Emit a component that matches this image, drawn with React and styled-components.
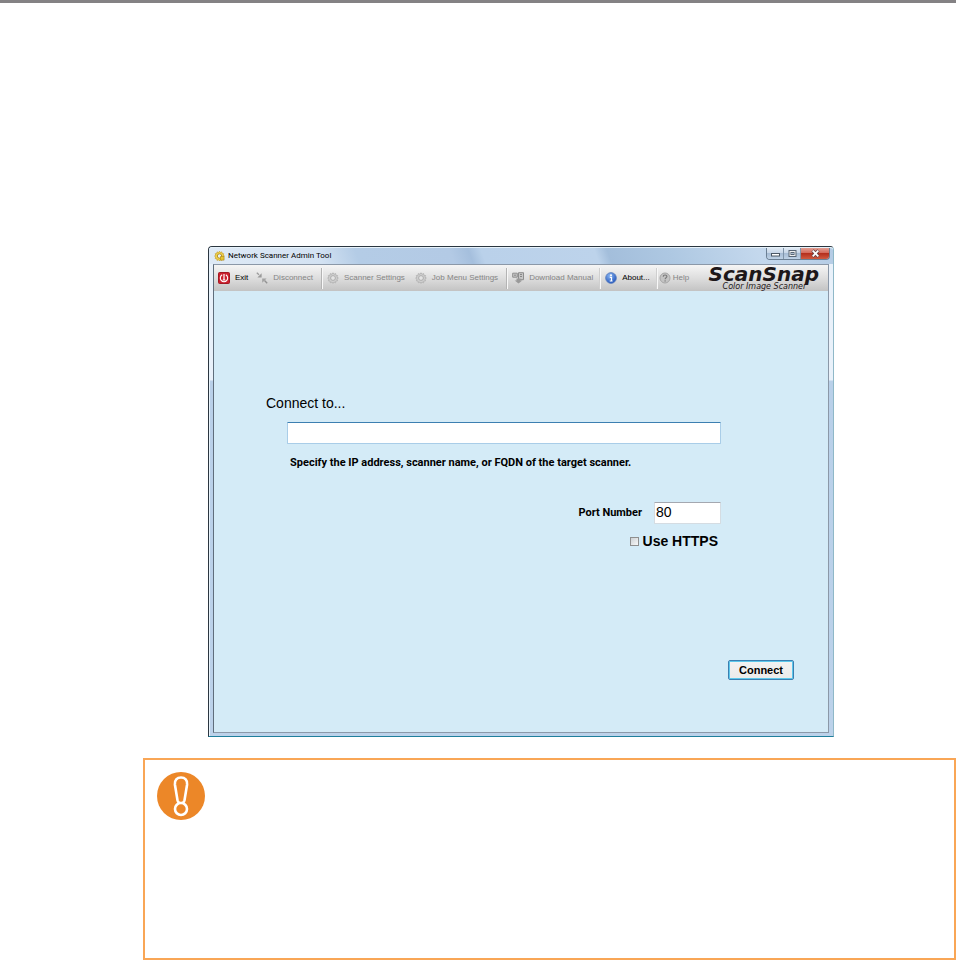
import { useState } from "react";
import styled, { createGlobalStyle } from "styled-components";

const GlobalStyle = createGlobalStyle`
  * {
    box-sizing: border-box;
  }

  body {
    margin: 0;
    background: #fff;
    color: #000;
    font-family: "Liberation Sans", Arial, sans-serif;
  }
`;

const Page = styled.main`
  border-top: 3px solid #848284;
  padding-top: 243px;
`;

const Window = styled.section`
  margin: 0 122px 21px 208px;
  padding: 0 4px 3px;
  border: 1px solid #2b3640;
  border-right-color: #8fb8c8;
  border-bottom: 1px solid #1f7f9c;
  border-radius: 4px 4px 0 0;
  background: linear-gradient(#e9f1fa 133px, #b9d0e9 134px, #bcd2ea);
  box-shadow: inset 1px 1px 0 #e8f3fb;
`;

const TitleBar = styled.header`
  display: flex;
  align-items: center;
  gap: 3px;
  height: 17px;
  margin: 0 -4px;
  padding-left: 5px;
  border-top: 1px solid #e8f3fb;
  border-radius: 3px 3px 0 0;
  background: linear-gradient(
    70deg,
    #dfeaf6 0%,
    #d3e2f2 18%,
    #b4cce6 24%,
    #b3cae5 39%,
    #a5bfdd 42%,
    #bad1ea 44%,
    #bdd3eb 62%,
    #a3bedb 64%,
    #aec8e2 74%,
    #c4d8ed 88%,
    #b5cce5 100%
  );
`;

const Title = styled.h1`
  flex: 1;
  margin: 0;
  font: 8px/14px Roboto, sans-serif;
  white-space: nowrap;
`;

const WindowButtons = styled.div`
  display: flex;
  align-self: flex-start;
  margin: 0 3px 0 0;
  border: 1px solid #6b7f93;
  border-top: 0;
  border-radius: 0 0 4px 4px;
  overflow: hidden;
`;

const WindowButton = styled.button`
  display: flex;
  align-items: center;
  justify-content: center;
  width: ${(p) => (p.$close ? 28 : 17)}px;
  height: 11px;
  padding: 0;
  border: 0;
  border-right: ${(p) => (p.$close ? "0" : "1px solid #7f93a8")};
  background: ${(p) =>
    p.$close
      ? "linear-gradient(#e3a094, #d4695a 45%, #b5301d 50%, #cf5a40)"
      : "linear-gradient(#dfe9f4, #c7d6e7 45%, #a7bdd5 50%, #bed1e5)"};
`;

const Client = styled.div`
  border: 1px solid #8b98a8;
  border-left-color: #5f6d7c;
  background: #d4ebf7;
`;

const Toolbar = styled.nav`
  display: flex;
  align-items: center;
  height: 26px;
  padding: 0 9px 0 4px;
  background: linear-gradient(#f5f5f5, #dedede 50%, #c3c3c3);
`;

const ToolButton = styled.button`
  display: flex;
  align-items: center;
  gap: ${(p) => p.$gap || 5}px;
  height: 24px;
  padding: 0;
  margin-right: ${(p) => p.$after || 8}px;
  border: 0;
  background: none;
  color: #000;
  font: 8px/14px "Liberation Sans", Arial, sans-serif;
  white-space: nowrap;

  &:disabled {
    color: #858585;
  }

  svg {
    flex: none;
  }
`;

const Divider = styled.span`
  width: 2px;
  height: 21px;
  margin-right: ${(p) => p.$after || 4}px;
  border-left: 1px solid ${(p) => (p.$light ? "#cfcfcf" : "#b4b4b4")};
  border-right: 1px solid #f8f8f8;
`;

const Brand = styled.div`
  margin-left: auto;
  color: #1d1719;
  font-family: "DejaVu Sans", sans-serif;
  font-style: italic;
  white-space: nowrap;
`;

const BrandName = styled.div`
  font-size: 20px;
  font-weight: bold;
  line-height: 18px;
`;

const BrandLine = styled.div`
  padding-left: 14px;
  font-size: 8px;
  line-height: 8px;
`;

const Form = styled.form`
  padding: 103px 34px 52px 52px;
`;

const Heading = styled.h2`
  margin: 0 0 10px;
  font-size: 14px;
  font-weight: normal;
  line-height: 18px;
`;

const Fields = styled.div`
  margin: 0 73px 0 21px;
`;

const TextInput = styled.input`
  display: block;
  width: ${(p) => p.$width || "100%"};
  height: 22px;
  padding: 0 1px 2px;
  border: 1px solid ${(p) => (p.$active ? "#a9cde8" : "#d5dce2")};
  border-top-color: ${(p) => (p.$active ? "#3c7fb1" : "#a4a8b0")};
  border-radius: 1px;
  outline: none;
  background: #fff;
  font: 14px/18px "Liberation Sans", Arial, sans-serif;
`;

const Hint = styled.label`
  display: block;
  margin: 10px 3px 30px;
  font: bold 11px/18px Roboto, sans-serif;
`;

const PortRow = styled.div`
  display: flex;
  align-items: center;
  justify-content: flex-end;
  gap: 12px;
  margin-bottom: 8px;
  font: bold 11px/20px Roboto, sans-serif;
`;

const HttpsRow = styled.label`
  display: flex;
  align-items: center;
  justify-content: flex-end;
  gap: 4px;
  margin-right: 3px;
  font-size: 14px;
  font-weight: bold;
  line-height: 18px;
`;

const Checkbox = styled.input`
  appearance: none;
  width: 9px;
  height: 9px;
  margin: 0;
  border: 1px solid #8e8f8f;
  background: linear-gradient(135deg, #cdd2d6, #f8f8f8);

  &:checked {
    background: #3c7fb1;
  }
`;

const Actions = styled.div`
  display: flex;
  justify-content: flex-end;
  margin-top: 110px;
`;

const ConnectButton = styled.button`
  width: 66px;
  height: 20px;
  padding: 0;
  border: 1px solid #3c7fb1;
  border-radius: 2px;
  background: linear-gradient(#f2f2f2, #ebebeb);
  box-shadow: inset 0 0 0 1px #5cc8ec;
  color: #000;
  font: bold 11px/16px "Liberation Sans", Arial, sans-serif;
`;

const Note = styled.aside`
  min-height: 202px;
  margin-left: 143px;
  padding: 12px;
  border: 2px solid #f9a656;
`;

const GEAR_PATH =
  "M6 .8l1 1.5 1.6-.8.2 1.8 1.8.2-.7 1.6 1.4 1-1.4 1 .7 1.7-1.8.2-.2 1.8L7 10l-1 1.4L5 10l-1.7.8-.2-1.8-1.8-.2L2 7.1l-1.4-1L2 5.1l-.7-1.6 1.8-.2.2-1.8L5 2.3z";

function GearIcon() {
  return (
    <svg width="12" height="12" viewBox="0 0 12 12" aria-hidden="true">
      <path d={GEAR_PATH} fill="#cfcfcf" stroke="#b0b0b0" strokeWidth=".8" />
      <circle cx="6" cy="6" r="2.4" fill="#e4e4e4" stroke="#a8a8a8" strokeWidth=".9" />
    </svg>
  );
}

function AppIcon() {
  return (
    <svg width="11" height="12" viewBox="0 0 12 12" aria-hidden="true">
      <path d={GEAR_PATH} fill="#f5d84c" stroke="#c9a12a" strokeWidth=".8" />
      <circle cx="6" cy="6" r="2.4" fill="#e9f0f5" stroke="#ad8a20" />
      <path d="M7 6.5h4v4H7z" fill="#e7c42f" stroke="#a57f17" strokeWidth=".6" />
    </svg>
  );
}

function ExitIcon() {
  return (
    <svg width="12" height="12" viewBox="0 0 12 12" aria-hidden="true">
      <rect x=".5" y=".5" width="11" height="11" rx="1" fill="#cb1f2d" stroke="#a31722" />
      <path d="M4.2 2.8a3.7 3.7 0 1 0 3.6 0" fill="none" stroke="#fff" strokeWidth="1.1" />
      <path d="M6 2v5.5M4.7 8h2.6" stroke="#fff" strokeWidth="1.2" />
    </svg>
  );
}

function DisconnectIcon() {
  return (
    <svg width="12" height="12" viewBox="0 0 12 12" aria-hidden="true">
      <path d="M.8.8l2.2 2" stroke="#9b9b9b" strokeWidth="1.3" />
      <path d="M5.6 1.2v4.2H1.4z" fill="#999" />
      <path d="M6.2 6.4h4.4L6.2 10.8z" fill="#a2a2a2" />
      <path d="M8.5 8.5l2.7 2.7" stroke="#929292" strokeWidth="1.4" />
    </svg>
  );
}

function DownloadIcon() {
  return (
    <svg width="13" height="12" viewBox="0 0 13 12" aria-hidden="true">
      <path d="M.7 1.2h4.6v4H.7zM6.5.7h5v7h-5z" fill="#c6c6c6" stroke="#8e8e8e" />
      <path d="M2 3.2h2M8 2.5h2M8 4.5h2" stroke="#888" />
      <path d="M4.5 6.5h4v2h1.8l-3.8 3-3.8-3h1.8z" fill="#999" />
    </svg>
  );
}

function InfoIcon() {
  return (
    <svg width="12" height="12" viewBox="0 0 12 12" aria-hidden="true">
      <defs>
        <radialGradient id="info" cx=".4" cy=".3" r=".7">
          <stop offset="0" stopColor="#8bb7f2" />
          <stop offset="1" stopColor="#2356bd" />
        </radialGradient>
      </defs>
      <circle cx="6" cy="6" r="5.4" fill="url(#info)" stroke="#5f82bd" strokeWidth=".8" />
      <circle cx="6" cy="3.2" r="1" fill="#fff" />
      <path d="M4.8 5.3H6.5V9M4.7 9h2.9" fill="none" stroke="#fff" strokeWidth="1.2" />
    </svg>
  );
}

function HelpIcon() {
  return (
    <svg width="12" height="12" viewBox="0 0 12 12" aria-hidden="true">
      <circle cx="6" cy="6" r="5" fill="#c4c4c4" stroke="#a6a6a6" />
      <path
        d="M4.2 4.7c0-2.3 3.7-2.2 3.7-.2 0 1.3-1.8 1.2-1.8 2.7"
        fill="none"
        stroke="#777"
        strokeWidth="1.1"
      />
      <circle cx="6.1" cy="8.9" r=".7" fill="#777" />
    </svg>
  );
}

function WarningIcon() {
  return (
    <svg width="48" height="48" viewBox="0 0 48 48" role="img" aria-label="Attention">
      <circle cx="24" cy="24" r="24" fill="#ec8728" />
      <path
        d="M24 5.5c-4 0-6.6 2.7-6.1 7l2.6 15.7c.9 4 6.1 4 7 0l2.6-15.7c.5-4.3-2.1-7-6.1-7z"
        fill="none"
        stroke="#fff"
        strokeWidth="2.6"
      />
      <circle cx="24" cy="37" r="6" fill="#ec8728" stroke="#fff" strokeWidth="2.6" />
    </svg>
  );
}

function WindowGlyph({ type }) {
  return (
    <svg width="11" height="9" viewBox="0 0 11 9" aria-hidden="true">
      {type === "min" && (
        <rect x="1.5" y="4.5" width="8" height="2.5" fill="#fff" stroke="#4c5865" />
      )}
      {type === "max" && (
        <>
          <rect x="2" y="1.5" width="7" height="6" fill="#eee" stroke="#596675" />
          <rect x="4" y="3.5" width="3" height="2" fill="#aebed0" stroke="#596675" />
        </>
      )}
      {type === "close" && (
        <>
          <path d="M2.5 1.5l6 6m0-6l-6 6" stroke="#6d4348" strokeWidth="3.4" />
          <path d="M2.7 1.7l5.6 5.6m0-5.6L2.7 7.3" stroke="#fff" strokeWidth="1.8" />
        </>
      )}
    </svg>
  );
}

function ConnectForm() {
  const [address, setAddress] = useState("");
  const [port, setPort] = useState("80");
  const [https, setHttps] = useState(false);

  return (
    <Form onSubmit={(e) => e.preventDefault()}>
      <Heading>Connect to...</Heading>
      <Fields>
        <TextInput
          id="address"
          $active
          value={address}
          onChange={(e) => setAddress(e.target.value)}
        />
        <Hint htmlFor="address">
          Specify the IP address, scanner name, or FQDN of the target scanner.
        </Hint>
        <PortRow>
          <label htmlFor="port">Port Number</label>
          <TextInput
            id="port"
            $width="67px"
            value={port}
            onChange={(e) => setPort(e.target.value)}
          />
        </PortRow>
        <HttpsRow>
          <Checkbox
            type="checkbox"
            checked={https}
            onChange={(e) => setHttps(e.target.checked)}
          />
          Use HTTPS
        </HttpsRow>
      </Fields>
      <Actions>
        <ConnectButton type="submit">Connect</ConnectButton>
      </Actions>
    </Form>
  );
}

export function App() {
  return (
    <Page>
      <GlobalStyle />
      <Window>
        <TitleBar>
          <AppIcon />
          <Title>Network Scanner Admin Tool</Title>
          <WindowButtons>
            <WindowButton aria-label="Minimize">
              <WindowGlyph type="min" />
            </WindowButton>
            <WindowButton aria-label="Maximize">
              <WindowGlyph type="max" />
            </WindowButton>
            <WindowButton aria-label="Close" $close>
              <WindowGlyph type="close" />
            </WindowButton>
          </WindowButtons>
        </TitleBar>
        <Client>
          <Toolbar>
            <ToolButton>
              <ExitIcon />
              Exit
            </ToolButton>
            <ToolButton disabled>
              <DisconnectIcon />
              Disconnect
            </ToolButton>
            <Divider />
            <ToolButton disabled $after={10}>
              <GearIcon />
              Scanner Settings
            </ToolButton>
            <ToolButton disabled>
              <GearIcon />
              Job Menu Settings
            </ToolButton>
            <Divider />
            <ToolButton disabled $gap={4} $after={6}>
              <DownloadIcon />
              Download Manual
            </ToolButton>
            <Divider $light />
            <ToolButton $after={6}>
              <InfoIcon />
              About...
            </ToolButton>
            <Divider $light $after={1} />
            <ToolButton disabled $gap={2}>
              <HelpIcon />
              Help
            </ToolButton>
            <Brand>
              <BrandName>ScanSnap</BrandName>
              <BrandLine>Color Image Scanner</BrandLine>
            </Brand>
          </Toolbar>
          <ConnectForm />
        </Client>
      </Window>
      <Note>
        <WarningIcon />
      </Note>
    </Page>
  );
}

export default App;
